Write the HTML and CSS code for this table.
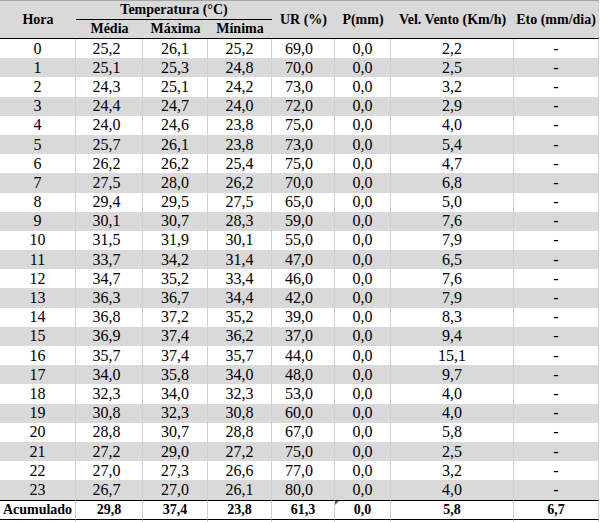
FILE: index.html
```html
<!DOCTYPE html>
<html lang="pt">
<head>
<meta charset="utf-8">
<title>Dados horários</title>
<link rel="stylesheet" href="styles.css">
</head>
<body>
<table class="data">
  <colgroup>
    <col class="c-hora"><col class="c-med"><col class="c-max"><col class="c-min">
    <col class="c-ur"><col class="c-p"><col class="c-vel"><col class="c-eto">
  </colgroup>
  <thead>
    <tr class="h1">
      <th rowspan="2" class="hb">Hora</th>
      <th colspan="3" class="temp">Temperatura (°C)</th>
      <th rowspan="2" class="hb">UR (%)</th>
      <th rowspan="2" class="hb">P(mm)</th>
      <th rowspan="2" class="hb">Vel. Vento (Km/h)</th>
      <th rowspan="2" class="hb last">Eto (mm/dia)</th>
    </tr>
    <tr class="h2">
      <th class="hb">Média</th>
      <th class="hb">Máxima</th>
      <th class="hb">Mínima</th>
    </tr>
  </thead>
  <tbody>
    <tr><td>0</td><td>25,2</td><td>26,1</td><td>25,2</td><td>69,0</td><td>0,0</td><td>2,2</td><td>-</td></tr>
    <tr><td>1</td><td>25,1</td><td>25,3</td><td>24,8</td><td>70,0</td><td>0,0</td><td>2,5</td><td>-</td></tr>
    <tr><td>2</td><td>24,3</td><td>25,1</td><td>24,2</td><td>73,0</td><td>0,0</td><td>3,2</td><td>-</td></tr>
    <tr><td>3</td><td>24,4</td><td>24,7</td><td>24,0</td><td>72,0</td><td>0,0</td><td>2,9</td><td>-</td></tr>
    <tr><td>4</td><td>24,0</td><td>24,6</td><td>23,8</td><td>75,0</td><td>0,0</td><td>4,0</td><td>-</td></tr>
    <tr><td>5</td><td>25,7</td><td>26,1</td><td>23,8</td><td>73,0</td><td>0,0</td><td>5,4</td><td>-</td></tr>
    <tr><td>6</td><td>26,2</td><td>26,2</td><td>25,4</td><td>75,0</td><td>0,0</td><td>4,7</td><td>-</td></tr>
    <tr><td>7</td><td>27,5</td><td>28,0</td><td>26,2</td><td>70,0</td><td>0,0</td><td>6,8</td><td>-</td></tr>
    <tr><td>8</td><td>29,4</td><td>29,5</td><td>27,5</td><td>65,0</td><td>0,0</td><td>5,0</td><td>-</td></tr>
    <tr><td>9</td><td>30,1</td><td>30,7</td><td>28,3</td><td>59,0</td><td>0,0</td><td>7,6</td><td>-</td></tr>
    <tr><td>10</td><td>31,5</td><td>31,9</td><td>30,1</td><td>55,0</td><td>0,0</td><td>7,9</td><td>-</td></tr>
    <tr><td>11</td><td>33,7</td><td>34,2</td><td>31,4</td><td>47,0</td><td>0,0</td><td>6,5</td><td>-</td></tr>
    <tr><td>12</td><td>34,7</td><td>35,2</td><td>33,4</td><td>46,0</td><td>0,0</td><td>7,6</td><td>-</td></tr>
    <tr><td>13</td><td>36,3</td><td>36,7</td><td>34,4</td><td>42,0</td><td>0,0</td><td>7,9</td><td>-</td></tr>
    <tr><td>14</td><td>36,8</td><td>37,2</td><td>35,2</td><td>39,0</td><td>0,0</td><td>8,3</td><td>-</td></tr>
    <tr><td>15</td><td>36,9</td><td>37,4</td><td>36,2</td><td>37,0</td><td>0,0</td><td>9,4</td><td>-</td></tr>
    <tr><td>16</td><td>35,7</td><td>37,4</td><td>35,7</td><td>44,0</td><td>0,0</td><td>15,1</td><td>-</td></tr>
    <tr><td>17</td><td>34,0</td><td>35,8</td><td>34,0</td><td>48,0</td><td>0,0</td><td>9,7</td><td>-</td></tr>
    <tr><td>18</td><td>32,3</td><td>34,0</td><td>32,3</td><td>53,0</td><td>0,0</td><td>4,0</td><td>-</td></tr>
    <tr><td>19</td><td>30,8</td><td>32,3</td><td>30,8</td><td>60,0</td><td>0,0</td><td>4,0</td><td>-</td></tr>
    <tr><td>20</td><td>28,8</td><td>30,7</td><td>28,8</td><td>67,0</td><td>0,0</td><td>5,8</td><td>-</td></tr>
    <tr><td>21</td><td>27,2</td><td>29,0</td><td>27,2</td><td>75,0</td><td>0,0</td><td>2,5</td><td>-</td></tr>
    <tr><td>22</td><td>27,0</td><td>27,3</td><td>26,6</td><td>77,0</td><td>0,0</td><td>3,2</td><td>-</td></tr>
    <tr><td>23</td><td>26,7</td><td>27,0</td><td>26,1</td><td>80,0</td><td>0,0</td><td>4,0</td><td>-</td></tr>
  </tbody>
  <tfoot>
    <tr class="total">
      <td>Acumulado</td><td>29,8</td><td>37,4</td><td>23,8</td><td>61,3</td><td class="flag">0,0</td><td>5,8</td><td>6,7</td>
    </tr>
    <tr class="tail">
      <td></td><td></td><td></td><td></td><td></td><td></td><td></td><td></td>
    </tr>
  </tfoot>
</table>
</body>
</html>
```

FILE: styles.css
```css
html, body {
  margin: 0;
  padding: 0;
  background: #ffffff;
}

.data {
  border-collapse: separate;
  border-spacing: 0;
  table-layout: fixed;
  width: 599px;
  font-family: "Liberation Serif", "Times New Roman", serif;
  color: #000000;
  border-top: 1px solid #a6a6a6;
}

.c-hora { width: 76px; }
.c-med  { width: 67px; }
.c-max  { width: 65px; }
.c-min  { width: 64px; }
.c-ur   { width: 63px; }
.c-p    { width: 56px; }
.c-vel  { width: 123px; }
.c-eto  { width: 85px; }

.data th,
.data td {
  padding: 0;
  text-align: center;
  vertical-align: middle;
  white-space: nowrap;
}

/* header */
.data th {
  background: #d9d9d9;
  font-size: 14px;
  font-weight: bold;
}
.data th.hb {
  border-bottom: 1px solid #000000;
}
.data th.last {
  border-right: 1px solid #d0d0d0;
}
.data th.temp {
  border-bottom: 1px solid #000000;
}
.data tr.h1 { height: 19px; }
.data tr.h2 { height: 19px; }

/* body */
.data tbody tr { height: 19.2px; }
.data tbody td {
  font-size: 16px;
  border-right: 1px solid #d0d0d0;
}
.data tbody tr:nth-child(even) td {
  background: #d9d9d9;
}
.data tbody td:nth-child(2) { padding-right: 5px; }
.data tbody td:nth-child(5) { padding-right: 8px; }

/* accumulated row */
.data tr.total { height: 20px; }
.data tr.total td {
  font-size: 14px;
  font-weight: bold;
  border-top: 1px solid #000000;
  border-bottom: 1px solid #000000;
  border-right: 1px solid #d0d0d0;
}
.data td.flag {
  position: relative;
}
.data td.flag::before {
  content: "";
  position: absolute;
  left: 0;
  top: 0;
  border-top: 4px solid #1f8a2a;
  border-right: 4px solid transparent;
}

.data tr.tail { height: 3px; }
.data tr.tail td {
  border-right: 1px solid #d0d0d0;
  padding: 0;
  font-size: 0;
  line-height: 0;
}
```
